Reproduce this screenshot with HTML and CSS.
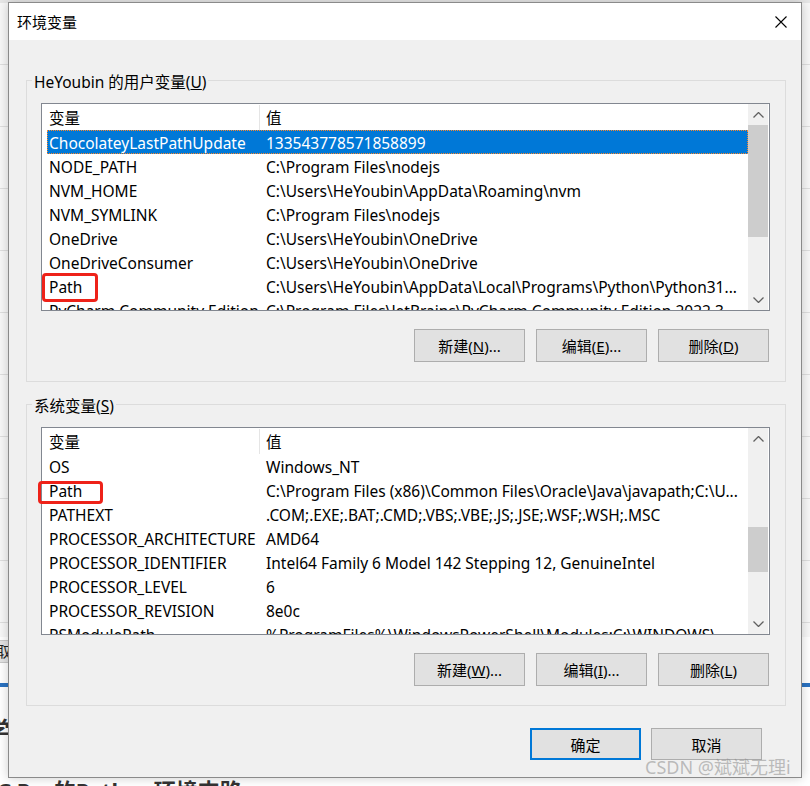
FILE: index.html
```html
<!DOCTYPE html>
<html lang="zh-CN">
<head>
    <meta charset="UTF-8">
    <title>环境变量</title>
    <link rel="stylesheet" href="styles.css">
</head>
<body>
    <!-- страница позади диалога, видна только по краям -->
    <div class="page">
        <div class="page-bar"></div>
        <ul class="page-nav">
            <li></li><li></li><li></li><li></li><li></li>
            <li></li><li></li><li></li><li></li><li></li>
        </ul>
        <div class="page-tab">获取</div>
        <div class="page-rule"></div>
        <div class="page-sub">学习</div>
        <div class="page-title">C Pro的Python环境支路</div>
    </div>

    <div class="dialog">
        <div class="titlebar">
            <span class="title">环境变量</span>
            <svg class="close" width="12" height="12" viewBox="0 0 12 12">
                <path d="M0.5 0.5 L11.5 11.5 M11.5 0.5 L0.5 11.5" stroke="#000" stroke-width="1.1" fill="none"/>
            </svg>
        </div>

        <div class="dialog-body">
            <div class="group">
                <div class="group-title">HeYoubin 的用户变量(<u>U</u>)</div>
                <div class="listbox">
                    <div class="list-main">
                        <div class="list-head">
                            <div class="col-name">变量</div>
                            <div class="col-value">值</div>
                        </div>
                        <div class="row selected">
                            <div class="col-name">ChocolateyLastPathUpdate</div>
                            <div class="col-value">133543778571858899</div>
                        </div>
                        <div class="row">
                            <div class="col-name">NODE_PATH</div>
                            <div class="col-value">C:\Program Files\nodejs</div>
                        </div>
                        <div class="row">
                            <div class="col-name">NVM_HOME</div>
                            <div class="col-value">C:\Users\HeYoubin\AppData\Roaming\nvm</div>
                        </div>
                        <div class="row">
                            <div class="col-name">NVM_SYMLINK</div>
                            <div class="col-value">C:\Program Files\nodejs</div>
                        </div>
                        <div class="row">
                            <div class="col-name">OneDrive</div>
                            <div class="col-value">C:\Users\HeYoubin\OneDrive</div>
                        </div>
                        <div class="row">
                            <div class="col-name">OneDriveConsumer</div>
                            <div class="col-value">C:\Users\HeYoubin\OneDrive</div>
                        </div>
                        <div class="row">
                            <div class="col-name">Path</div>
                            <div class="col-value">C:\Users\HeYoubin\AppData\Local\Programs\Python\Python31...</div>
                        </div>
                        <div class="row">
                            <div class="col-name">PyCharm Community Edition</div>
                            <div class="col-value">C:\Program Files\JetBrains\PyCharm Community Edition 2022.3...</div>
                        </div>
                    </div>
                    <div class="scrollbar">
                        <div class="sb-btn">
                            <svg width="11" height="6" viewBox="0 0 11 6"><polyline points="0.5,5.5 5.5,0.5 10.5,5.5" fill="none" stroke="#606060" stroke-width="1.3"/></svg>
                        </div>
                        <div class="sb-track"><div class="sb-thumb thumb-user"></div></div>
                        <div class="sb-btn">
                            <svg width="11" height="6" viewBox="0 0 11 6"><polyline points="0.5,0.5 5.5,5.5 10.5,0.5" fill="none" stroke="#606060" stroke-width="1.3"/></svg>
                        </div>
                    </div>
                    <!-- красная рамка-пометка поверх списка -->
                    <div class="mark mark-user"></div>
                </div>
                <div class="btn-row">
                    <button class="btn">新建(<u>N</u>)...</button>
                    <button class="btn">编辑(<u>E</u>)...</button>
                    <button class="btn">删除(<u>D</u>)</button>
                </div>
            </div>

            <div class="group">
                <div class="group-title">系统变量(<u>S</u>)</div>
                <div class="listbox">
                    <div class="list-main">
                        <div class="list-head">
                            <div class="col-name">变量</div>
                            <div class="col-value">值</div>
                        </div>
                        <div class="row">
                            <div class="col-name">OS</div>
                            <div class="col-value">Windows_NT</div>
                        </div>
                        <div class="row">
                            <div class="col-name">Path</div>
                            <div class="col-value">C:\Program Files (x86)\Common Files\Oracle\Java\javapath;C:\U...</div>
                        </div>
                        <div class="row">
                            <div class="col-name">PATHEXT</div>
                            <div class="col-value">.COM;.EXE;.BAT;.CMD;.VBS;.VBE;.JS;.JSE;.WSF;.WSH;.MSC</div>
                        </div>
                        <div class="row">
                            <div class="col-name">PROCESSOR_ARCHITECTURE</div>
                            <div class="col-value">AMD64</div>
                        </div>
                        <div class="row">
                            <div class="col-name">PROCESSOR_IDENTIFIER</div>
                            <div class="col-value">Intel64 Family 6 Model 142 Stepping 12, GenuineIntel</div>
                        </div>
                        <div class="row">
                            <div class="col-name">PROCESSOR_LEVEL</div>
                            <div class="col-value">6</div>
                        </div>
                        <div class="row">
                            <div class="col-name">PROCESSOR_REVISION</div>
                            <div class="col-value">8e0c</div>
                        </div>
                        <div class="row">
                            <div class="col-name">PSModulePath</div>
                            <div class="col-value">%ProgramFiles%\WindowsPowerShell\Modules;C:\WINDOWS\...</div>
                        </div>
                    </div>
                    <div class="scrollbar">
                        <div class="sb-btn">
                            <svg width="11" height="6" viewBox="0 0 11 6"><polyline points="0.5,5.5 5.5,0.5 10.5,5.5" fill="none" stroke="#606060" stroke-width="1.3"/></svg>
                        </div>
                        <div class="sb-track"><div class="sb-thumb thumb-sys"></div></div>
                        <div class="sb-btn">
                            <svg width="11" height="6" viewBox="0 0 11 6"><polyline points="0.5,0.5 5.5,5.5 10.5,0.5" fill="none" stroke="#606060" stroke-width="1.3"/></svg>
                        </div>
                    </div>
                    <div class="mark mark-sys"></div>
                </div>
                <div class="btn-row">
                    <button class="btn">新建(<u>W</u>)...</button>
                    <button class="btn">编辑(<u>I</u>)...</button>
                    <button class="btn">删除(<u>L</u>)</button>
                </div>
            </div>

            <div class="dialog-footer">
                <button class="btn btn-default">确定</button>
                <button class="btn">取消</button>
            </div>
        </div>
    </div>

    <div class="watermark">CSDN @斌斌无理i</div>
</body>
</html>
```

FILE: styles.css
```css
* {
    margin: 0;
    padding: 0;
    box-sizing: border-box;
}

html,
body {
    width: 810px;
    height: 786px;
    overflow: hidden;
}

body {
    position: relative;
    font-family: "Noto Sans", "Noto Sans CJK SC", sans-serif;
    font-size: 15.5px;
    color: #000;
    background: #fff;
}

/* страница позади */
.page {
    height: 786px;
    display: flex;
    flex-direction: column;
    overflow: hidden;
}

.page-bar {
    height: 3px;
    flex-shrink: 0;
    background: #e6e6e6;
}

.page-nav {
    list-style: none;
    height: 634px;
    flex-shrink: 0;
    background: #f7f7f7;
}

.page-nav li {
    height: 62px;
    border-bottom: 1px solid #dedede;
}

.page-tab {
    height: 23px;
    flex-shrink: 0;
    margin: 3px 0 0 -20px;
    width: 80px;
    background: #e3e3e3;
    border: 1px solid #c8c8c8;
    line-height: 21px;
    font-size: 15px;
    color: #222;
}

.page-rule {
    height: 4px;
    flex-shrink: 0;
    margin-top: 20px;
    background: #2a72c0;
}

.page-sub {
    flex-shrink: 0;
    margin: 28px 0 0 -14px;
    line-height: 30px;
    font-size: 24px;
    font-weight: bold;
    color: #333;
}

.page-title {
    flex-shrink: 0;
    margin: 30px 0 0 -3px;
    line-height: 30px;
    font-size: 22px;
    font-weight: bold;
    color: #333;
    white-space: nowrap;
}

/* диалог */
.dialog {
    position: absolute;
    left: 8px;
    top: 2px;
    width: 794px;
    height: 776px;
    border: 1px solid #8a8a8a;
    background: #f0f0f0;
    display: flex;
    flex-direction: column;
    box-shadow: 0 0 10px rgba(0, 0, 0, 0.2);
}

.titlebar {
    height: 37px;
    flex-shrink: 0;
    background: #fff;
    display: flex;
    align-items: center;
    justify-content: space-between;
    padding: 0 14px 0 8px;
}

.title {
    font-size: 15px;
    line-height: 20px;
}

.dialog-body {
    padding: 40px 15px 0 17px;
}

.group {
    border: 1px solid #dcdcdc;
    padding: 0 15px 19px 14px;
}

.group + .group {
    margin-top: 22px;
}

.group-title {
    width: fit-content;
    margin: -9px 0 0 -9px;
    padding: 0 2px;
    line-height: 20px;
    background: #f0f0f0;
}

.listbox {
    position: relative;
    height: 208px;
    margin-top: 11px;
    border: 1px solid #828790;
    background: #fff;
    display: flex;
}

.list-main {
    flex: 1;
    min-width: 0;
    overflow: hidden;
}

.list-head {
    display: flex;
    height: 26px;
    line-height: 26px;
    padding-top: 1px;
}

.list-head .col-name {
    width: 218px;
    padding-left: 7px;
    border-right: 1px solid #e5e5e5;
}

.list-head .col-value {
    padding-left: 6px;
}

.row {
    display: flex;
    height: 24px;
    line-height: 24px;
    padding-top: 1px;
    margin-left: 5px;
    white-space: nowrap;
}

.row .col-name {
    width: 212px;
    flex-shrink: 0;
    padding-left: 2px;
    overflow: hidden;
}

.row .col-value {
    flex: 1;
    min-width: 0;
    padding-left: 7px;
    overflow: hidden;
}

.row.selected {
    background: #0078d7;
    color: #fff;
    outline: 1px dotted #ff8728;
    outline-offset: -1px;
}

/* красная рамка вокруг Path */
.mark {
    position: absolute;
    border: 3px solid #ee2219;
    border-radius: 4px;
}

.mark-user {
    left: 0;
    top: 169px;
    width: 56px;
    height: 29px;
}

.mark-sys {
    left: -4px;
    top: 53px;
    width: 65px;
    height: 23px;
}

.scrollbar {
    width: 20px;
    margin-right: 1px;
    flex-shrink: 0;
    background: #f0f0f0;
    display: flex;
    flex-direction: column;
}

.sb-btn {
    height: 21px;
    flex-shrink: 0;
    display: flex;
    align-items: center;
    justify-content: center;
}

.sb-track {
    flex: 1;
}

.sb-thumb {
    background: #cdcdcd;
}

.thumb-user {
    height: 112px;
}

.thumb-sys {
    margin-top: 78px;
    height: 45px;
}

.btn-row {
    display: flex;
    justify-content: flex-end;
    gap: 11px;
    margin-top: 18px;
    padding-right: 1px;
}

.btn {
    width: 111px;
    height: 33px;
    border: 1px solid #adadad;
    background: #e1e1e1;
    font-family: inherit;
    font-size: 15px;
    color: #000;
    display: flex;
    align-items: center;
    justify-content: center;
}

.dialog-footer {
    display: flex;
    justify-content: flex-end;
    gap: 10px;
    margin-top: 22px;
    padding-right: 24px;
}

.dialog-footer .btn {
    height: 32px;
}

.btn-default {
    border: 2px solid #0078d7;
}

.watermark {
    position: absolute;
    left: 645px;
    top: 755px;
    font-size: 18px;
    line-height: 24px;
    color: rgba(140, 140, 140, 0.55);
    white-space: nowrap;
}
```
